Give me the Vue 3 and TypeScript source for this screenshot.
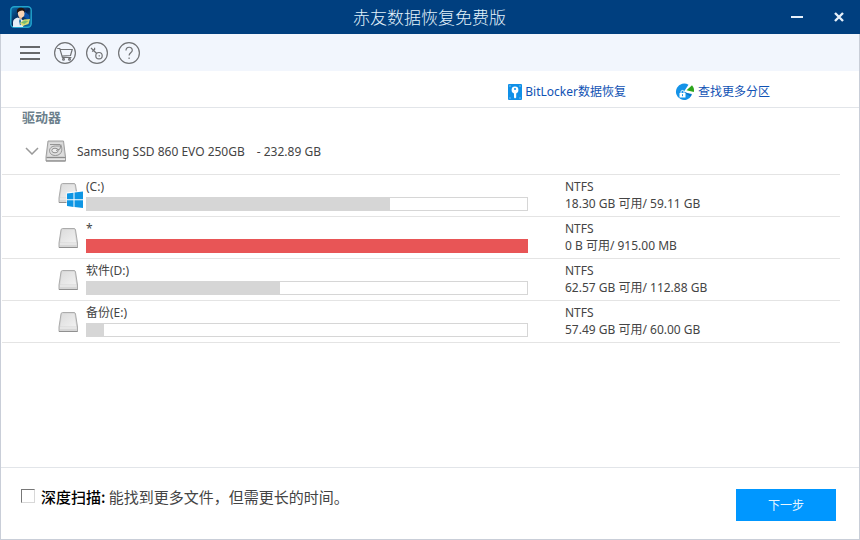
<script setup lang="ts">
import { ref } from 'vue'

interface Volume {
  name: string
  fs: string
  free: string
  total: string
  used: number
  system?: boolean
}

const volumes: Volume[] = [
  { name: '(C:)', fs: 'NTFS', free: '18.30 GB', total: '59.11 GB', used: 69, system: true },
  { name: '*', fs: 'NTFS', free: '0 B', total: '915.00 MB', used: 100 },
  { name: '软件(D:)', fs: 'NTFS', free: '62.57 GB', total: '112.88 GB', used: 44 },
  { name: '备份(E:)', fs: 'NTFS', free: '57.49 GB', total: '60.00 GB', used: 4 },
]

const expanded = ref(true)
const deepScan = ref(false)
</script>

<template>
  <div class="window">
    <header class="titlebar">
      <svg class="logo" viewBox="0 0 22 22" aria-hidden="true">
        <defs>
          <linearGradient id="logo-bg" x1="0" y1="0" x2="1" y2="1">
            <stop offset="0" stop-color="#0b6fae" />
            <stop offset="0.5" stop-color="#04204f" />
            <stop offset="1" stop-color="#0a7fc0" />
          </linearGradient>
        </defs>
        <rect x="0.8" y="0.8" width="20.4" height="20.4" rx="3.5" fill="url(#logo-bg)" stroke="#22a4cc" stroke-width="1.4" />
        <path d="M13 4l6 5v5l-5-3z" fill="#0a4fa6" />
        <path d="M3 21v-5c0-2.500 2-3.500 4.500-4.500l3 1 4 3L13 21z" fill="#e3edf6" />
        <path d="M8.500 10.500h4l-1.500 3.500z" fill="#e9b48f" />
        <path d="M9.800 13l1 1 .5 4-1.300 1.500L9 15z" fill="#2374a8" />
        <ellipse cx="11.200" cy="7.500" rx="3.300" ry="3.900" fill="#fad3b3" />
        <path d="M7.200 7.300C6.200 3 8.500 1.500 11.500 1.800c3 .2 4 2.400 3.200 5.400-.3-2-1-2.600-2.500-2.800-2 .5-3.700.4-5 2.900z" fill="#24150f" />
        <path d="M10 17l4-3.500 6-.5-1.500 5-6 2z" fill="#d8dc72" />
        <path d="M11 16.500l4-2 3.500.5-4 3z" fill="#79bd73" />
      </svg>
      <h1>赤友数据恢复免费版</h1>
      <div class="controls">
        <button type="button" aria-label="最小化">
          <svg viewBox="0 0 12 12"><path d="M0 6h12" stroke="#e6f0fa" stroke-width="2" /></svg>
        </button>
        <button type="button" aria-label="关闭">
          <svg viewBox="0 0 12 12"><path d="M2 2l8 8M10 2l-8 8" stroke="#e6f0fa" stroke-width="2.400" /></svg>
        </button>
      </div>
    </header>

    <nav class="toolbar">
      <button type="button" class="menu" aria-label="菜单">
        <svg viewBox="0 0 20 14"><path d="M0 1h20M0 7h20M0 13h20" stroke="#66686b" stroke-width="2" /></svg>
      </button>
      <button type="button" class="round" aria-label="购买">
        <svg viewBox="0 0 22 22">
          <circle cx="11" cy="11" r="10.400" />
          <path d="M3.200 6.500h2.600l2.600 9h9M6.200 7.500h12l-1.700 6-8.500.6" />
          <circle cx="9.500" cy="17.300" r="0.900" /><circle cx="15.500" cy="17.300" r="0.900" />
        </svg>
      </button>
      <button type="button" class="round" aria-label="注册">
        <svg viewBox="0 0 22 22">
          <circle cx="11" cy="11" r="10.400" />
          <circle cx="13" cy="13.700" r="3.200" />
          <path d="M10.700 11.500L5 6M6.200 9.700l2.200-2.200M8.600 5.800v2.200M12.700 13.500l1 .8" />
        </svg>
      </button>
      <button type="button" class="round" aria-label="帮助">
        <svg viewBox="0 0 22 22">
          <circle cx="11" cy="11" r="10.400" />
          <path d="M8 8.500c0-4.300 6.300-4.300 6.300-.3 0 2.500-3.200 2.700-3.200 5.300M11.100 15.500v1.600" />
        </svg>
      </button>
    </nav>

    <div class="links">
      <a href="#bitlocker">
        <svg class="lock" viewBox="0 0 14 16" aria-hidden="true">
          <rect width="14" height="16" rx="1" fill="#1090e8" />
          <circle cx="7" cy="6" r="3.400" fill="#fff" /><path d="M6 8h2.200v5.500L7 14.500l-1-1z" fill="#fff" />
          <circle cx="7" cy="5" r="1" fill="#1090e8" />
          <path d="M1.500 2h1M11.500 2h1M1.500 14h1M11.500 14h1" stroke="#d6ecff" />
        </svg>
        <span>BitLocker数据恢复</span>
      </a>
      <a href="#partitions">
        <svg class="pie" viewBox="0 0 20 18" aria-hidden="true">
          <path d="M13.500 1.800A8.200 8.200 0 1 0 16.700 12L9 8.500z" fill="#1593e8" />
          <path d="M11.500 7.300l5.500-5c1.700 1.800 2.300 4 1.900 6.600z" fill="#2da51c" />
          <path d="M9 9.500l8 1.500-1.500 2.500z" fill="#0874c7" />
          <rect x="4.500" y="10" width="6" height="4.500" fill="#fff" />
          <path d="M6 10V8.800c0-1.800 3-1.800 3 0V10" fill="none" stroke="#fff" />
          <path d="M7.500 11.200v2" stroke="#1593e8" />
        </svg>
        <span>查找更多分区</span>
      </a>
    </div>

    <main class="drives">
      <h2>驱动器</h2>
      <div class="disk">
        <button type="button" class="toggle" :aria-expanded="expanded" aria-label="展开" @click="expanded = !expanded">
          <svg viewBox="0 0 14 8"><path d="M1 1l6 6 6-6" fill="none" stroke="#999" stroke-width="1.500" /></svg>
        </button>
        <svg class="hdd" viewBox="0 0 22 22" aria-hidden="true">
          <path d="M3 1h15.500l2 16v4H1v-4z" fill="#d0d0d0" stroke="#a0a0a0" />
          <path d="M1.500 17.500h19M1 21h19.500" stroke="#8c8c8c" /><path d="M2 19.300h18" stroke="#eee" />
          <path d="M4 2.500h13.500l1.500 13.500H2.500z" fill="#dedede" />
          <path d="M5 4.500h10c3 2 3 11-4.500 11-8 0-8-9.500 0-9.500h5" fill="none" stroke="#959595" />
          <ellipse cx="10" cy="10.500" rx="3.200" ry="2.300" fill="#eee" stroke="#909090" />
          <path d="M16 4.500l-1 4.500-4 1.500" fill="none" stroke="#909090" />
        </svg>
        <span class="model">Samsung SSD 860 EVO 250GB</span>
        <span>- 232.89 GB</span>
      </div>
      <ul v-show="expanded">
        <li v-for="v in volumes" :key="v.name">
          <svg class="vol" :class="{ system: v.system }" viewBox="0 0 26 26" aria-hidden="true">
            <defs>
              <linearGradient id="vol-top" x1="0" y1="0" x2="1" y2="1">
                <stop offset="0" stop-color="#dcdcdc" />
                <stop offset="1" stop-color="#f1f1f1" />
              </linearGradient>
            </defs>
            <path d="M3 2Q3.200.5 4.500.5h11.500q1.300 0 1.500 1.500l2 13v4.500H1V15z" fill="#d6d6d6" stroke="#ababab" />
            <path d="M4.200 1.800h12.200L18.200 14.500H2.300z" fill="url(#vol-top)" />
            <path d="M2 16h16.500" stroke="#f6f6f6" /><path d="M1 19.500h18.500" stroke="#909090" />
            <g v-if="v.system">
              <path d="M8.500 9.500L26 7.500V26L8.500 24z" fill="#fff" />
              <path d="M9 10.500l6.500-.8v6.600H9zM16.500 9.600L25 8.500v7.800h-8.500zM9 17.300h6.500v6.600L9 23.100zM16.500 17.300H25V25l-8.500-1z" fill="#0e96e4" />
            </g>
          </svg>
          <div class="usage">
            <span>{{ v.name }}</span>
            <div class="bar" :class="{ full: v.used === 100 }">
              <div class="fill" :style="{ width: v.used + '%' }"></div>
            </div>
          </div>
          <div class="info">
            <span>{{ v.fs }}</span>
            <span>{{ v.free }} 可用/ {{ v.total }}</span>
          </div>
        </li>
      </ul>
    </main>

    <footer>
      <label for="deep">
        <input id="deep" v-model="deepScan" type="checkbox" />
        <span><strong>深度扫描:</strong> 能找到更多文件，但需更长的时间。</span>
      </label>
      <button type="button" class="next">下一步</button>
    </footer>
  </div>
</template>

<style>
body {
  margin: 0;
}
</style>

<style scoped>
.window {
  box-sizing: border-box;
  display: flex;
  flex-direction: column;
  min-height: 100vh;
  background: #fff;
  color: #444;
  font: 12px/17px "Noto Sans", "Noto Sans CJK SC", sans-serif;
}
.window > :not(.titlebar) {
  border: solid #c9ced8;
  border-width: 0 1px;
}
h1, h2, ul {
  margin: 0;
  padding: 0;
}
button {
  padding: 0;
  border: 0;
  background: none;
  font: inherit;
}
svg {
  display: block;
}
.titlebar {
  display: grid;
  grid-template-columns: 1fr auto 1fr;
  align-items: center;
  height: 34px;
  padding: 0 15px 0 10px;
  background: #003f7f;
}
.logo {
  width: 22px;
  height: 22px;
}
h1 {
  padding-left: 4px;
  color: #e2f2fb;
  font-family: "Noto Sans CJK SC", sans-serif;
  font-size: 17px;
  font-weight: 300;
  line-height: 24px;
}
.controls {
  display: flex;
  justify-content: flex-end;
  gap: 30px;
}
.controls svg {
  width: 12px;
  height: 12px;
}
.toolbar {
  display: flex;
  align-items: center;
  gap: 10px;
  height: 37px;
  padding-left: 19px;
  background: #f2f6fd;
}
.menu {
  margin-right: 4px;
}
.menu svg {
  width: 20px;
  height: 14px;
}
.round svg {
  width: 22px;
  height: 22px;
  fill: none;
  stroke: #707275;
  stroke-width: 1.2;
}
.links {
  display: flex;
  align-items: center;
  justify-content: flex-end;
  gap: 49px;
  height: 36px;
  padding: 5px 89px 0 0;
  box-sizing: border-box;
}
.links a {
  display: flex;
  align-items: center;
  gap: 3px;
  color: #1052b4;
  text-decoration: none;
}
.lock {
  width: 14px;
  height: 16px;
}
.pie {
  width: 20px;
  height: 18px;
}
.drives {
  flex: 1;
}
.drives::before,
footer::before {
  content: "";
  display: block;
  height: 1px;
  background: #e2e5e9;
}
h2 {
  padding-left: 21px;
  color: #6c808c;
  font-size: 13px;
  line-height: 18px;
}
.disk {
  display: flex;
  align-items: center;
  height: 44px;
  padding: 6px 0 0 24px;
  box-sizing: border-box;
}
.toggle svg {
  width: 14px;
  height: 8px;
}
.hdd {
  width: 22px;
  height: 22px;
  margin: 0 10px 0 6px;
}
.model {
  margin-right: 12px;
}
.disk + ul {
  margin: 4px 19px 0 1px;
  list-style: none;
  border-bottom: 1px solid #e4e4e4;
}
li {
  display: grid;
  grid-template-columns: 26px 1fr 275px;
  height: 42px;
  padding-left: 56px;
  box-sizing: border-box;
  border-top: 1px solid #e4e4e4;
}
.vol {
  width: 26px;
  height: 26px;
  margin-top: 11px;
}
.vol.system {
  margin-top: 8px;
}
.usage {
  margin: 3px 37px 0 2px;
}
.usage span,
.info span {
  display: block;
}
.bar {
  height: 14px;
  margin-top: 2px;
  box-sizing: border-box;
  border: 1px solid #d6d6d6;
}
.fill {
  height: 100%;
  margin-left: -1px;
  background: #d6d6d6;
}
.full {
  border-color: #e85556;
  background: #e85556;
}
.full .fill {
  background: #e85556;
}
.info {
  margin-top: 3px;
}
footer {
  display: grid;
  grid-template-columns: 1fr 100px;
  padding: 0 23px 18px 20px;
  border-bottom-width: 1px !important;
}
footer::before {
  grid-column: 1 / -1;
  margin: 0 -23px 21px -20px;
}
label {
  display: flex;
  align-items: center;
  gap: 6px;
  height: 14px;
  font-family: "Noto Sans CJK SC", sans-serif;
  font-size: 15px;
}
strong {
  color: #000;
  font-weight: 500;
}
input {
  appearance: none;
  width: 14px;
  height: 14px;
  margin: 0;
  border: 1px solid #d8d8d8;
  border-top-color: #777;
  border-left-color: #777;
  background: #fff;
}
input:checked {
  background: #0097ff;
}
.next {
  height: 32px;
  background: #0097ff;
  color: #e8f6ff;
}
</style>
